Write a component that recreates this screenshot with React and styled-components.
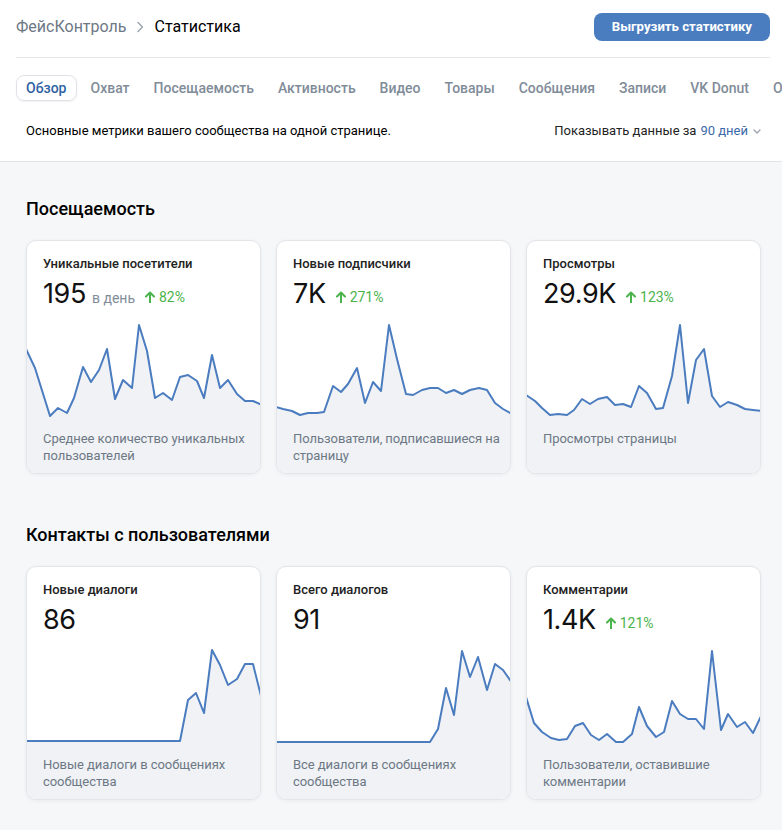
import styled, { createGlobalStyle } from 'styled-components';

const GlobalStyle = createGlobalStyle`
  html, body {
    margin: 0;
    padding: 0;
    background: #f6f7f9;
    overflow-x: hidden;
  }
  body {
    font-family: Roboto, "Noto Sans", Arial, sans-serif;
    color: #000;
  }
`

const Page = styled.div`
  width: 782px;
  min-height: 830px;
  background: #f6f7f9;
`

const Header = styled.header`
  background: #fff;
  border-bottom: 1px solid #e2e4e8;
  overflow: hidden;
`

const TopBar = styled.div`
  display: flex;
  align-items: center;
  justify-content: space-between;
  height: 57px;
  margin: 0 12px 0 16px;
  border-bottom: 1px solid #e4e6ea;
`

const Crumbs = styled.div`
  display: flex;
  align-items: center;
  gap: 10px;
  font-size: 16px;
  margin-top: -4px;
`

const CrumbLink = styled.span`
  color: #6d7885;
`

const CrumbCurrent = styled.span`
  color: #000;
`

const ExportButton = styled.button`
  height: 28px;
  padding: 0 18px;
  border: none;
  border-radius: 8px;
  background: #4a7dc0;
  color: #fff;
  font-family: Roboto, Arial, sans-serif;
  font-weight: 700;
  font-size: 13.2px;
  margin-top: -4px;
`

const Tabs = styled.nav`
  display: flex;
  gap: 4px;
  padding: 17px 0 0 16px;
  white-space: nowrap;
`

const Tab = styled.span`
  display: inline-flex;
  align-items: center;
  height: 26px;
  padding: 0 9px;
  border-radius: 8px;
  font-size: 14px;
  font-weight: 500;
  color: ${p => (p.$active ? '#2f62a3' : '#818c99')};
  border: 1px solid ${p => (p.$active ? '#dfe3e8' : 'transparent')};
  box-shadow: ${p => (p.$active ? '0 1px 2px rgba(0,0,0,0.06)' : 'none')};
  box-sizing: border-box;
`

const InfoRow = styled.div`
  display: flex;
  justify-content: space-between;
  align-items: center;
  padding: 22px 20px 23px 26px;
  font-size: 13px;
  color: #000;
`

const Period = styled.span`
  display: inline-flex;
  align-items: center;
  gap: 4px;
  color: #222;
`

const PeriodValue = styled.span`
  color: #3b6aa8;
`

const Content = styled.main`
  padding: 36px 21px 30px 26px;
`

const Section = styled.section`
  & + & {
    margin-top: 50px;
  }
`

const SectionTitle = styled.h2`
  margin: 0 0 20px;
  font-size: 18px;
  line-height: 22px;
  font-weight: 500;
  color: #000;
`

const CardGrid = styled.div`
  display: grid;
  grid-template-columns: repeat(3, 235px);
  gap: 15px;
`

const Card = styled.div`
  display: flex;
  flex-direction: column;
  height: 234px;
  box-sizing: border-box;
  background: #fff;
  border: 1px solid #e3e5e9;
  border-radius: 10px;
  box-shadow: 0 1px 4px rgba(0, 0, 0, 0.05);
  overflow: hidden;
`

const CardHead = styled.div`
  height: 78px;
  box-sizing: border-box;
  padding: 15px 16px 0;
`

const CardTitle = styled.div`
  font-size: 13px;
  line-height: 16px;
  font-weight: 500;
  color: #222;
`

const ValueRow = styled.div`
  display: flex;
  align-items: baseline;
  gap: 8px;
  margin-top: 6px;
  height: 32px;
`

const Value = styled.span`
  font-family: Inter, Roboto, sans-serif;
  font-size: 27px;
  line-height: 32px;
  font-weight: 400;
  letter-spacing: -0.4px;
  color: #111;
`

const Unit = styled.span`
  font-size: 14px;
  color: #818c99;
  margin-left: -2px;
`

const Growth = styled.span`
  display: inline-flex;
  align-items: center;
  gap: 4px;
  font-size: 14px;
  color: #4bb34b;
  margin-left: 2px;
`

const Chart = styled.svg`
  display: block;
  width: 235px;
  height: 98px;
  margin-left: -1px;
`

const CardFoot = styled.div`
  flex: 1;
  background: #f0f2f5;
  padding: 13px 6px 0 16px;
  font-size: 13px;
  line-height: 17px;
  letter-spacing: -0.05px;
  color: #6d7885;
`

const ArrowUp = () => (
  <svg width="10" height="12" viewBox="0 0 10 12">
    <path d="M5 11.5V2M1 5.5 5 1.5l4 4" fill="none" stroke="#4bb34b" strokeWidth="2" strokeLinecap="round" strokeLinejoin="round" />
  </svg>
);

const Chevron = () => (
  <svg width="10" height="8" viewBox="0 0 10 8">
    <path d="M2 3l3 3 3-3" fill="none" stroke="#99a2ad" strokeWidth="1.3" strokeLinecap="round" strokeLinejoin="round" />
  </svg>
);

const CrumbArrow = () => (
  <svg width="8" height="12" viewBox="0 0 8 12">
    <path d="M2 1.5l4.5 4.5L2 10.5" fill="none" stroke="#99a2ad" strokeWidth="1.4" strokeLinecap="round" strokeLinejoin="round" />
  </svg>
);

const Sparkline = ({ points }) => {
  const line = points.map(([x, y], i) => `${i ? 'L' : 'M'}${x} ${y}`).join(' ');
  const last = points[points.length - 1];
  const area = `${line} L${last[0]} 98 L${points[0][0]} 98 Z`;
  return (
    <Chart viewBox="0 0 235 98" preserveAspectRatio="none">
      <path d={area} fill="#f0f2f5" />
      <path d={line} fill="none" stroke="#4a7cbf" strokeWidth="2" strokeLinejoin="round" />
    </Chart>
  );
};

const tabs = ['Обзор', 'Охват', 'Посещаемость', 'Активность', 'Видео', 'Товары', 'Сообщения', 'Записи', 'VK Donut', 'Офферы'];

const sections = [{
  title: 'Посещаемость',
  cards: [{
    title: 'Уникальные посетители',
    value: '195',
    unit: 'в день',
    growth: '82%',
    note: 'Среднее количество уникальных пользователей',
    points: [[0,30],[9,49],[24,97],[32,89],[41,94],[48,79],[57,48],[65,63],[73,51],[81,30],[89,80],[97,61],[106,69],[113,6],[121,32],[129,79],[137,74],[146,81],[154,58],[162,56],[171,62],[178,79],[186,36],[194,69],[202,61],[211,75],[219,82],[227,82],[236,86]],
  }, {
    title: 'Новые подписчики',
    value: '7K',
    growth: '271%',
    note: 'Пользователи, подписавшиеся на страницу',
    points: [[0,88],[7,90],[16,92],[24,96],[32,94],[41,94],[48,93],[57,67],[65,73],[72,65],[81,49],[89,84],[97,63],[105,72],[113,6],[121,40],[130,75],[137,76],[146,71],[154,69],[162,69],[170,74],[178,71],[186,75],[194,71],[203,69],[211,71],[219,84],[227,90],[236,95]],
  }, {
    title: 'Просмотры',
    value: '29.9K',
    growth: '123%',
    note: 'Просмотры страницы',
    points: [[0,76],[9,82],[16,89],[24,96],[32,95],[41,96],[48,91],[56,80],[64,85],[72,80],[81,78],[89,86],[97,85],[105,88],[113,67],[121,74],[130,90],[137,89],[146,57],[154,6],[162,84],[170,41],[178,30],[186,77],[194,88],[202,83],[211,86],[219,90],[227,91],[236,92]],
  }],
}, {
  title: 'Контакты с пользователями',
  cards: [{
    title: 'Новые диалоги',
    value: '86',
    note: 'Новые диалоги в сообщениях сообщества',
    points: [[0,96],[154,96],[162,55],[170,48],[178,68],[186,5],[194,20],[202,40],[211,34],[219,19],[227,19],[236,55]],
  }, {
    title: 'Всего диалогов',
    value: '91',
    note: 'Все диалоги в сообщениях сообщества',
    points: [[0,97],[154,97],[162,84],[170,43],[178,70],[186,6],[194,32],[202,12],[211,45],[219,19],[227,25],[236,38]],
  }, {
    title: 'Комментарии',
    value: '1.4K',
    growth: '121%',
    note: 'Пользователи, оставившие комментарии',
    points: [[0,52],[8,78],[16,87],[25,93],[33,95],[41,94],[49,81],[57,78],[65,90],[73,95],[81,89],[90,97],[97,97],[106,89],[113,62],[121,81],[130,92],[138,87],[146,56],[154,69],[162,74],[170,74],[178,84],[186,6],[195,85],[202,69],[211,82],[219,77],[227,88],[236,69]],
  }],
}];

const StatCard = ({ card }) => (
  <Card>
    <CardHead>
      <CardTitle>{card.title}</CardTitle>
      <ValueRow>
        <Value>{card.value}</Value>
        {card.unit && <Unit>{card.unit}</Unit>}
        {card.growth && <Growth><ArrowUp />{card.growth}</Growth>}
      </ValueRow>
    </CardHead>
    <Sparkline points={card.points} />
    <CardFoot>{card.note}</CardFoot>
  </Card>
);

const App = () => (
  <Page>
    <GlobalStyle />
    <Header>
      <TopBar>
        <Crumbs>
          <CrumbLink>ФейсКонтроль</CrumbLink>
          <CrumbArrow />
          <CrumbCurrent>Статистика</CrumbCurrent>
        </Crumbs>
        <ExportButton>Выгрузить статистику</ExportButton>
      </TopBar>
      <Tabs>
        {tabs.map((t, i) => <Tab key={t} $active={i === 0}>{t}</Tab>)}
      </Tabs>
      <InfoRow>
        <span>Основные метрики вашего сообщества на одной странице.</span>
        <Period>Показывать данные за <PeriodValue>90 дней</PeriodValue><Chevron /></Period>
      </InfoRow>
    </Header>
    <Content>
      {sections.map(s => (
        <Section key={s.title}>
          <SectionTitle>{s.title}</SectionTitle>
          <CardGrid>
            {s.cards.map(c => <StatCard key={c.title} card={c} />)}
          </CardGrid>
        </Section>
      ))}
    </Content>
  </Page>
);

export default App;
